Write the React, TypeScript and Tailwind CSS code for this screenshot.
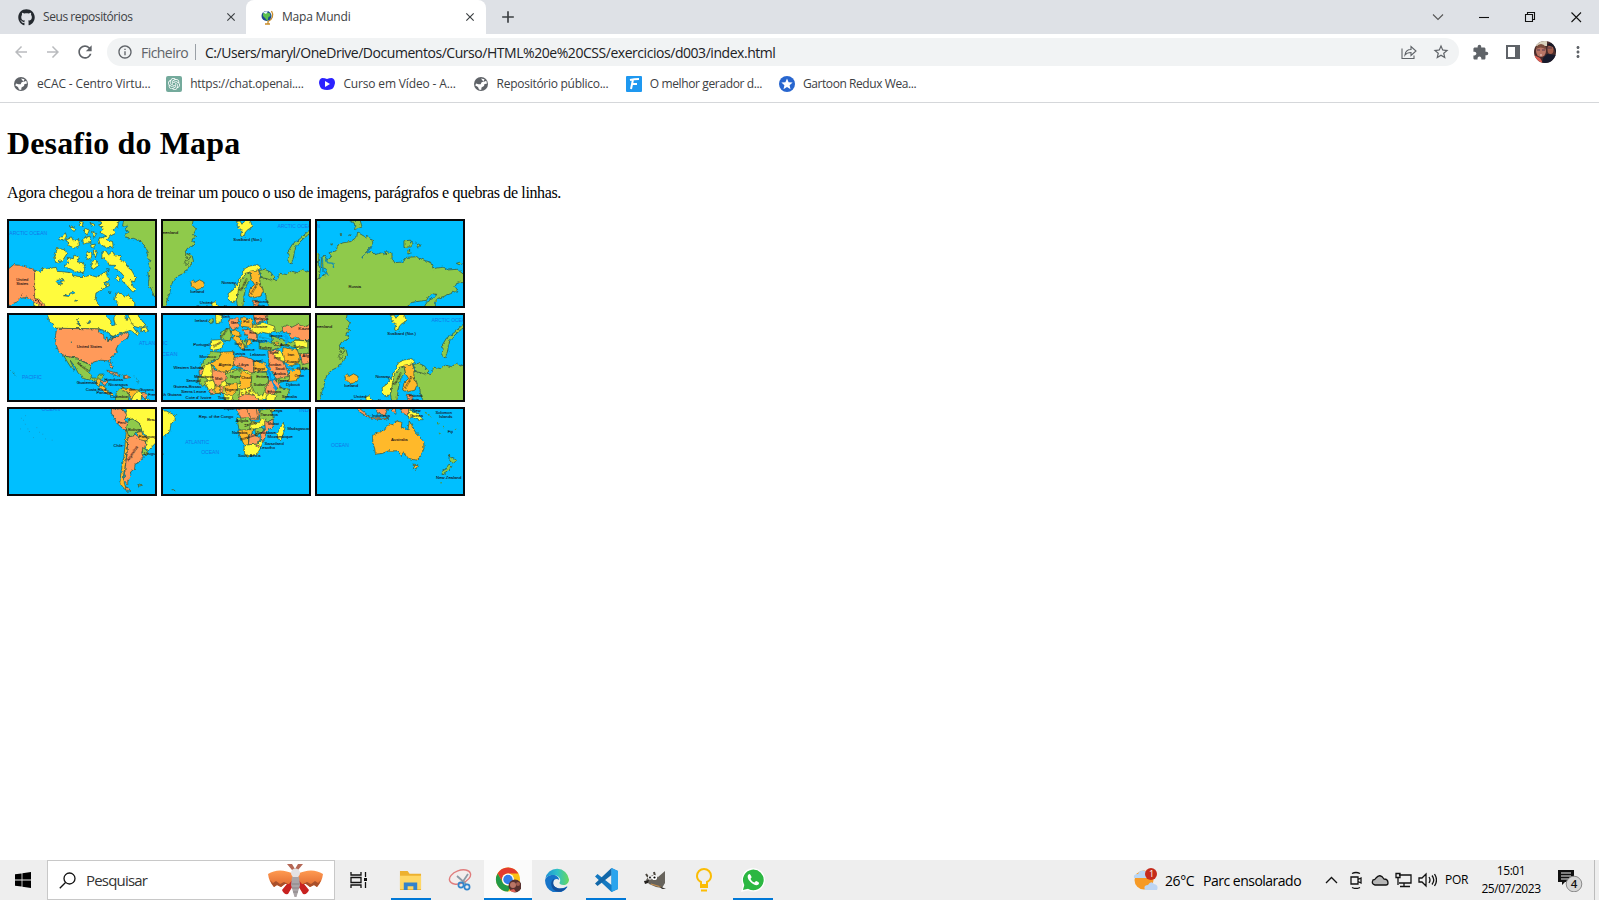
import React from "react";
import { FaGithub } from "react-icons/fa";
import { SiOpenai } from "react-icons/si";
import {
  MdArrowBack,
  MdArrowForward,
  MdRefresh,
  MdInfoOutline,
  MdStarBorder,
  MdExtension,
  MdMoreVert,
  MdClose,
  MdAdd,
} from "react-icons/md";

const Y = "#fffb3d";
const G = "#8fca4c";
const O = "#ff9a5a";
const A = "#ffb92b";

type LandProps = { d: string; c: string };
const Land = ({ d, c }: LandProps) => (
  <path d={d} fill={c} stroke="#2f4a35" strokeWidth="2" strokeLinejoin="round" />
);

type LabelProps = { x: number; y: number; t: string; r?: number; s?: number; w?: number };
const Label = ({ x, y, t, r = 0, s = 11, w }: LabelProps) => (
  <text
    x={x}
    y={y}
    fontSize={s}
    textLength={w}
    lengthAdjust="spacingAndGlyphs"
    transform={`rotate(${r} ${x} ${y})`}
    fill="#1b1016"
    stroke="#1b1016"
    strokeWidth="0.2"
  >
    {t}
  </text>
);
const Sea = ({ x, y, t, w }: LabelProps) => (
  <text x={x} y={y} fontSize="14" textLength={w} lengthAdjust="spacingAndGlyphs" fill="#1677e8">
    {t}
  </text>
);

type TileProps = { id: string; box: string; land: React.ReactNode; children?: React.ReactNode };
const Tile = ({ id, box, land, children }: TileProps) => (
  <div className="h-[89px] w-[150px] border-2 border-[#07090b] bg-[#00bfff]">
    <svg viewBox={box} preserveAspectRatio="none" className="block h-full w-full overflow-hidden font-['Liberation_Sans',sans-serif]">
      <filter id={id} x="-5%" y="-5%" width="110%" height="110%">
        <feTurbulence type="fractalNoise" baseFrequency="0.11" numOctaves="2" seed="4" />
        <feDisplacementMap in="SourceGraphic" scale="10" xChannelSelector="R" yChannelSelector="G" />
      </filter>
      <g filter={`url(#${id})`}>{land}</g>
      {children}
    </svg>
  </div>
);

const NorthCanada = () => (
  <Tile
    id="n1"
    box="26 16 440 257"
    land={
      <>
        <Land c={G} d="M376 0 L368 30 384 32 374 42 386 48 376 60 384 70 400 68 422 76 436 92 446 112 440 128 454 136 446 146 452 160 444 172 448 190 446 206 456 224 464 244 490 260 490 0Z" />
        <Land c={Y} d="M103 165 L122 168 132 158 150 160 168 156 172 168 192 170 210 172 216 180 236 184 256 184 272 180 292 186 306 176 320 168 322 184 330 192 312 204 318 216 302 226 288 234 286 250 294 264 302 290 100 290Z" />
        <Land c={O} d="M10 168 L28 158 40 148 58 150 80 156 103 163 103 250 116 252 134 272 130 285 112 268 98 256 80 246 60 250 48 262 36 266 10 280Z" />
        <Land c={Y} d="M172 98 L196 104 200 116 188 134 168 144 162 128Z M202 126 L220 130 222 118 238 126 232 140 250 142 256 158 250 172 226 170 214 162 192 154 204 142Z" />
        <Land c={Y} d="M196 52 L200 64 188 76 176 72Z M198 70 L214 64 220 76 236 72 238 90 222 98 206 90Z M208 32 L228 40 222 48Z M240 16 L250 20 246 34 238 26Z M256 38 L268 44 262 58 252 50Z M248 68 L270 62 274 80 250 86Z M274 44 L290 54 282 66Z M272 88 L286 86 284 98 274 96Z M262 108 L276 114 272 134 258 128Z M280 104 L292 110 288 124 282 120Z M270 20 L284 26 276 34Z" />
        <Land c={Y} d="M292 12 L308 22 296 28 310 40 300 50 320 62 296 70 300 86 322 98 340 94 338 78 322 74 330 62 346 54 340 42 352 38 358 12Z" />
        <Land c={Y} d="M276 138 L288 134 294 152 280 162 272 152Z M306 110 L318 106 326 118 338 108 346 122 362 120 360 132 376 140 384 156 396 166 408 188 404 200 394 196 400 214 408 224 398 230 382 212 366 196 372 182 358 166 344 160 346 150 328 150 322 136 306 128Z M352 180 L362 188 356 198 346 190Z M318 200 L330 210 320 216Z M326 232 L334 230Z" />
        <Land c={Y} d="M350 290 L354 266 344 254 350 234 368 236 374 246 386 240 394 252 404 262 410 290Z" />
        <g fill="#00bfff" stroke="#2f4a35" strokeWidth="2">
          <path d="M166 196l14-2 8-4 4 6-12 4 8 6-12 2zM190 242l16-4 12-10 6 6-12 4-6 6zM224 256l10-2-6 5z" />
          <path d="M320 160l8 2-2 8z" />
        </g>
        <path d="M64 242l4-8M100 250l14 8 10 14" stroke="#51271e" strokeWidth="3" fill="none" />
      </>
    }
  >
    <path d="M103 164V250" stroke="#a95a3a" strokeWidth="1.5" />
    <Sea x={27} y={57} t="ARCTIC OCEAN" w={114} />
    <Label x={48} y={197} t="United" w={36} />
    <Label x={48} y={210} t="States" w={36} />
  </Tile>
);

const NorthAtlantic = ({ id }: { id: string }) => (
  <Tile
    id={id}
    box="14 16 440 257"
    land={
      <>
        <Land c={G} d="M0 0H108L102 28 114 40 106 56 112 66 100 74 112 84 104 92 88 98 80 110 102 122 106 138 92 154 80 172 60 182 46 194 38 212 34 236 24 262 18 290H0Z" />
        <Land c={G} d="M82 114l14 6-4 10-10-4zM80 134l14 6-8 10-6-6z" />
        <Land c={Y} d="M234 18 L246 16 252 26 262 14 268 10 278 18 284 34 270 42 262 50 258 64 248 58 252 44 242 36Z" />
        <Land c={G} d="M470 30 L444 54 424 72 404 86 392 106 394 120 390 138 400 146 408 124 410 108 414 94 430 76 448 60 470 46Z" />
        <Land c={A} d="M96 198l10-4 4 8 14-8 12 6 4 12-10 8-14 4-10-8-6-6z" />
        <Land c={G} d="M470 164 L446 170 434 162 420 172 400 168 386 178 366 174 362 188 352 196 338 186 320 190 306 182 304 200 312 224 324 240 326 256 340 290H470Z" />
        <Land c={G} d="M304 166 L320 162 338 170 350 186 342 196 326 190 314 188Z" />
        <Land c={A} d="M276 168 L300 160 306 178 306 204 316 226 308 244 286 248 272 242 276 222 290 208 280 192Z" />
        <Land c={Y} d="M210 236 L226 224 238 204 248 184 260 160 276 152 300 148 310 158 300 164 280 168 262 176 252 194 244 216 238 248 226 264 212 258Z" />
        <Land c={G} d="M240 230 L248 198 262 174 276 172 280 190 268 204 262 224 258 246 254 280 240 280 236 258Z" />
        <Land c={O} d="M282 256h20l-2 12 4 20h-20l4-18z" />
        <Land c={Y} d="M160 264l12-4 10 14-4 12h-12z" />
      </>
    }
  >
    <Sea x={359} y={36} t="ARCTIC OCEAN" w={112} />
    <Label x={-2} y={55} t="Greenland" w={62} />
    <Label x={226} y={77} t="Svalbard (Nor.)" w={86} />
    <Label x={96} y={234} t="Iceland" w={42} />
    <Label x={190} y={206} t="Norway" w={44} />
    <Label x={125} y={267} t="United" w={38} />
    <Label x={116} y={278} t="Kingdom" w={50} />
    <Label x={198} y={278} t="Den." w={28} />
    <Label x={290} y={264} t="Estonia" w={42} />
    <Label x={292} y={276} t="Latvia" w={30} />
    <Label x={250} y={230} t="Sweden" r={-62} w={44} />
    <Label x={282} y={240} t="Finland" r={-62} w={42} />
  </Tile>
);

const Russia = () => (
  <Tile
    id="n3"
    box="14 16 440 257"
    land={
      <>
        <Land c={G} d="M0 110 L20 116 18 148 24 160 20 190 0 198Z" />
        <Land c={G} d="M0 200 L28 186 44 172 40 160 26 156 28 126 38 120 46 134 58 124 50 112 72 106 76 90 92 82 116 78 134 64 136 50 156 62 178 68 182 82 174 98 160 112 178 108 188 118 208 112 222 118 218 108 240 112 240 128 248 142 272 140 284 126 314 124 340 136 356 140 364 160 392 156 410 164 436 162 470 188 470 205 438 200 430 214 438 226 416 236 396 244 378 250 370 260 372 290H0Z" />
        <path d="M268 292L288 272 300 262 326 258 344 256 350 244 366 236 376 238 364 250 350 256 340 270 332 292Z" fill="#00bfff" stroke="#2f4a35" strokeWidth="2" />
        <Land c={G} d="M110 14l16 8 4 20 20-8-6-20zM276 76l20-2 8 12-8 8-20 2zM312 82l16 8-10 8zM288 104l10 8-10 4zM434 144l12-4 6 6-10 2zM56 84h4v4h-4zM84 54h4v3h-4zM110 58h6v3h-6z" />
        <path d="M30 126l2 40 18 14 M40 128l6 14 16 2 2 14" fill="none" stroke="#128fb0" strokeWidth="4" />
        <path d="M180 92l-16 20-16 14" fill="none" stroke="#217f91" strokeWidth="3" />
      </>
    }
  >
    <Sea x={13} y={36} t="N" w={10} />
    <Label x={109} y={220} t="Russia" w={38} />
  </Tile>
);

const NorthAmerica = () => (
  <Tile
    id="n4"
    box="26 14 440 256"
    land={
      <>
        <Land c={Y} d="M134 0 L144 20 148 32 168 54 300 56 318 70 340 78 360 70 376 66 392 60 412 74 420 68 408 62 400 50 420 38 408 24 390 22 380 30 376 0Z" />
        <Land c={Y} d="M386 18 L382 0H404l14 20 20 24-14 10-22-6zM424 54l14-4 8 12-20 2z" />
        <Land c={O} d="M170 54 L300 56 308 66 318 74 334 84 352 80 374 66 388 72 382 84 370 90 356 102 348 118 352 128 334 140 330 150 340 170 334 176 326 152 300 150 280 156 270 170 260 158 244 152 232 144 192 138 178 128 168 104 166 76Z" />
        <Land c={G} d="M192 138 L232 144 244 152 260 158 272 170 268 188 276 204 290 204 298 192 312 192 308 206 294 214 280 212 252 206 234 188 224 168 210 150 224 180 214 174 200 152Z" />
        <g fill="#00bfff" stroke="#2f4a35" strokeWidth="2">
          <path d="M296 58l12 2 20 8 6 10-8 16-6-14-6 12-4-20-14-6zM324 90l16-6-6 8zM336 80l14-4-2 6zM230 26l8 10 2 12-6-12zM262 40l8-10 2 6z" />
          <path d="M314 0l4 16 14 14 4 16 10-2-4-18 10-26z" />
        </g>
        <Land c={A} d="M292 206l12 2-6 18 16 4 8 14 20 8-4 6-22-10-14-14-14-12z" />
        <Land c={O} d="M304 212h20l-4 16-10-4zM320 180l20 6 24 10-12 2-20-8zM370 198l14-4 6 8-18 4z" />
        <Land c={G} d="M350 244l22-12 2 10 14 6-2 26h-40z" />
        <Land c={A} d="M366 234l24 2 28 4-6 18-20 10-4-20-18-6z" />
        <Land c={Y} d="M414 242l12 6-2 24h-30l6-14zM436 262l24 12h-24z" />
        <Land c={O} d="M426 250l16 2-4 14-10-2z" />
        <path d="M402 198l10 8 4 16M34 184l12 12M214 94v4" fill="none" stroke="#2b6f65" strokeWidth="3" strokeDasharray="4 3" />
      </>
    }
  >
    <Label x={230} y={114} t="United States" w={76} />
    <Sea x={418} y={105} t="ATLANTIC" w={74} />
    <Sea x={65} y={207} t="PACIFIC" w={60} />
    <Label x={230} y={160} t="Mexico" r={38} w={42} />
    <Label x={314} y={214} t="Honduras" w={56} />
    <Label x={230} y={223} t="Guatemala" w={62} />
    <Label x={326} y={228} t="Nicaragua" w={58} />
    <Label x={257} y={242} t="Costa Rica" w={62} />
    <Label x={290} y={252} t="Panama" w={46} />
    <Label x={331} y={264} t="Colombia" w={52} />
    <Label x={386} y={244} t="Ven." w={24} />
    <Label x={420} y={243} t="Guyana" w={42} />
    <Label x={446} y={258} t="French" w={36} />
  </Tile>
);

const AfricaEurope = () => (
  <Tile
    id="n5"
    box="14 14 440 256"
    land={
      <>
        <Land c={G} d="M320 0H470V60L440 68 420 56 396 50 372 62 360 70 340 56 330 40Z" />
        <Land c={O} d="M470 36 L440 50 420 42 400 52 388 44 374 50 376 66 396 70 400 86 416 80 430 92 470 90Z" />
        <Land c={Y} d="M158 90l30-2 10 10-8 18-24 4-10-4zM276 46l40-10 34 12 2 14-20 8-18-4-14 6-22-8zM172 10l20 6-4 22-14 2z" />
        <Land c={G} d="M154 28l10-6 2 14-12 4zM188 66l26-14 6 22-4 18-28-4zM304 98l26-4 36 0 4 18-30 8-36-4zM250 90l14 2 4 20-12-6z" />
        <Land c={O} d="M214 26l26-4 4 26-20 12-10-14zM286 10l40 4 2 14-36 12zM254 60l22-4 24 20-4 16-26-8z" />
        <Land c={A} d="M248 22l34 4 2 26-34-4zM222 82l18-6 18 28 2 16-12-4-14-22zM376 112l48 8 4 40-36 8-20-22z" />
        <Land c={G} d="M340 76l30 10 28 12 20-10 36 6v54l-30-14-8-22-30-4-40-6zM424 150l40-10v40l-36-6z" />
        <Land c={O} d="M330 122l34-2 22 54 10 30-40 8-22-44zM428 130h40v24l-34 10z" />
        <Land c={Y} d="M364 122l14 12 2 22-22-8-10-18zM410 90l40 2v20l-34 4z" />
        <Land c={G} d="M160 124l28 2-6 22-20 4-24 22-14-2 14-22zM356 206l40-8-2 12-38 10z" />
        <Land c={Y} d="M132 170l26-12 12 24 30 4 40-12 40 12 44 4 10 40 10 40H200l-4-20-28 0-28-24z" />
        <Land c={A} d="M188 126l40-2 2 40-20 20-24 4-28-28 24-14zM396 176h30l4 14-16 22-20 2z" />
        <Land c={O} d="M228 142l24-4 34 10 2 44-10-4-30-16-22-6z" />
        <Land c={A} d="M288 154l34 2 8 28-42 2zM244 178l38 18-4 36-28 10-4-22z" />
        <Land c={Y} d="M132 170l26-12 10 54-40 2z" />
        <Land c={O} d="M162 178l42 10 4 18-18 12-14 22-14-6zM122 182l14-8-4 18-8 4zM326 216l24-8 26 30-24 16-30-6z" />
        <Land c={G} d="M206 190l34-12 10 4-4 38-20 6-24-8zM282 188l44-2 6 26-10 26-8 20-24-10-10-24z" />
        <Land c={G} d="M120 198l24 6 10 14-20 10-16-12zM360 232l36 6-16 36h-46l18-24zM222 274l6-38 20 0-4 38z" />
        <Land c={Y} d="M140 216l26-6 8 24-20 10zM206 220l18 4 0 18-18 2zM246 240l32-8 12 18-16 16-32 2zM330 248l24 8-6 24h-30z" />
        <Land c={A} d="M170 226l16 4v20h-14zM200 228l36-10 4 16-20 24-18-4z" />
        <Land c={O} d="M150 240l16-2 4 14-12 2zM242 262l20-10 30 4 12 20h-60zM186 226l10 6-2 20-8-4z" />
        <Land c={A} d="M216 62l20-4 14 20-22 0zM264 90l14-2 4 14-12 2zM350 94l12 2v10h-10z" />
        <path d="M322 160l22 52 12 28" fill="none" stroke="#0093df" strokeWidth="6" />
        <path d="M384 160l16 18 12 2" fill="none" stroke="#00a9ef" strokeWidth="6" />
        <path d="M378 74l10 8-2 16" fill="none" stroke="#00a9ef" strokeWidth="9" />
        <path d="M306 80l20 4 18 8-12 6-30-2z" fill="#00bfff" stroke="#35524d" />
      </>
    }
  >
    <Sea x={-40} y={104} t="ATLANTIC" w={68} />
    <Sea x={-2} y={136} t="OCEAN" w={60} />
    <Label x={110} y={35} t="Ireland" w={38} />
    <Label x={192} y={22} t="Neth" w={24} />
    <Label x={218} y={40} t="Ger" w={22} />
    <Label x={256} y={38} t="Pol" w={18} />
    <Label x={288} y={28} t="Belarus" w={44} />
    <Label x={286} y={54} t="Ukraine" w={42} />
    <Label x={422} y={60} t="Kazak" w={42} />
    <Label x={334} y={79} t="Georgia" w={40} />
    <Label x={192} y={84} t="France" r={-55} w={34} />
    <Label x={166} y={112} t="Spain" r={-30} w={28} />
    <Label x={274} y={72} t="Rom." w={24} />
    <Label x={230} y={105} t="Italy" w={22} />
    <Label x={105} y={108} t="Portugal" w={50} />
    <Label x={284} y={96} t="Bulgaria" w={44} />
    <Label x={304} y={115} t="Turkey" w={38} />
    <Label x={366} y={106} t="Azer." w={30} />
    <Label x={406} y={112} t="Turkm." w={38} />
    <Label x={252} y={122} t="Greece" w={38} />
    <Label x={222} y={135} t="Tunisia" w={40} />
    <Label x={276} y={139} t="Lebanon" w={48} />
    <Label x={334} y={132} t="Syria" w={28} />
    <Label x={348} y={146} t="Iraq" w={20} />
    <Label x={389} y={136} t="Iran" w={20} />
    <Label x={434} y={140} t="Afg." w={24} />
    <Label x={124} y={143} t="Morocco" w={50} />
    <Label x={181} y={167} t="Algeria" w={38} />
    <Label x={242} y={169} t="Libya" w={30} />
    <Label x={284} y={157} t="Israel" w={30} />
    <Label x={289} y={180} t="Egypt" w={32} />
    <Label x={330} y={167} t="Jordan" w={40} />
    <Label x={386} y={160} t="Kuwait" w={38} />
    <Label x={352} y={181} t="Saudi" w={30} />
    <Label x={348} y={194} t="Arabia" w={36} />
    <Label x={418} y={180} t="U.A.E." w={36} />
    <Label x={410} y={200} t="Oman" w={30} />
    <Label x={46} y={178} t="Western Sahara" w={90} />
    <Label x={108} y={203} t="Mauritania" w={58} />
    <Label x={171} y={209} t="Mali" w={22} />
    <Label x={216} y={204} t="Niger" w={30} />
    <Label x={250} y={207} t="Chad" w={28} />
    <Label x={295} y={205} t="Eritrea" w={38} />
    <Label x={358} y={216} t="Yemen" w={36} />
    <Label x={84} y={217} t="Senegal" w={44} />
    <Label x={287} y={227} t="Sudan" w={34} />
    <Label x={385} y={227} t="Djibouti" w={42} />
    <Label x={46} y={235} t="Guinea-Bissau" w={84} />
    <Label x={200} y={243} t="Nigeria" w={40} />
    <Label x={328} y={250} t="Ethiopia" w={42} />
    <Label x={68} y={248} t="Sierra Leone" w={76} />
    <Label x={10} y={257} t="ch Guiana" w={60} />
    <Label x={82} y={266} t="Cote d' Ivoire" w={78} />
    <Label x={178} y={268} t="Togo" w={36} />
    <Label x={250} y={256} t="C.A.R." r={-18} w={36} />
    <Label x={372} y={265} t="Somalia" w={46} />
  </Tile>
);

const SouthAmerica = () => (
  <Tile
    id="n7"
    box="26 296 440 256"
    land={
      <>
        <Land c={Y} d="M368 280 L380 300 376 322 388 328 400 326 420 340 426 362 440 378 442 394 436 410 446 422 462 404 490 380V280Z" />
        <Land c={O} d="M336 286l10 12 20-4 14 18-4 14 10 20-2 14-12-2-20-18-10-20-8-12z" />
        <Land c={G} d="M386 328l14-2 20 14 6 22-16 4-6 12-20 2-4-26z" />
        <Land c={A} d="M412 366l14-2 4 12 12 6-2 14-14-2-10-12zM380 356l6 22-4 40-4 40-8 44 6 26 20 16-24-8-12-18 4-36 8-40 4-40z" />
        <Land c={O} d="M384 380l24-4 18 14 14 2-4 16-10 18 4 16-14 16-10 4-2 14-12 10 2 14-10 10 0 14-10-12 2-40 6-40z" />
        <Land c={G} d="M428 412l14 8 4 12-18 2z" />
        <Land c={O} d="M376 530l20 12-16 2z" />
        <Land c={G} d="M414 524l10-2 4 4-10 2z" />
      </>
    }
  >
    <path d="M62 324h2m10 18h2m-16 14h2m20 0h2m2 8h3m20-12h2m6 14h2m8 6h2m6 14h2m18 4h2m-58-8h2m-26-66h2m-8 14h2" stroke="#287d9d" strokeWidth="2" />
    <Sea x={124} y={302} t="OCEAN" w={56} />
    <Label x={353} y={340} t="Peru" w={25} />
    <Label x={442} y={332} t="Brazil" w={34} />
    <Label x={385} y={362} t="Bolivia" w={38} />
    <Label x={417} y={383} t="Paraguay" w={52} />
    <Label x={341} y={411} t="Chile" w={28} />
    <Label x={432} y={434} t="Uruguay" w={50} />
    <Label x={386} y={454} t="Argentina" r={-56} s={12} w={52} />
  </Tile>
);

const SouthAfrica = () => (
  <Tile
    id="n8"
    box="14 296 440 256"
    land={
      <>
        <Land c={Y} d="M0 302 L24 302 36 308 52 316 50 328 38 342 34 364 18 378 0 382Z" />
        <Land c={O} d="M232 280 L236 300 244 312 250 326 272 324 282 330 302 328 304 300 312 280Z" />
        <Land c={G} d="M238 324l34-2 8 12 10 4-4 20-42 4-4-20zM306 300l32-6 10 32-20 10-22-8zM290 354l16-6 12 8-6 14-18 4z" />
        <Land c={Y} d="M280 336l26 0 4-8 14-4-2 20-18 8-14 4-16 0zM330 290l14 0 6 10-8 6z" />
        <Land c={A} d="M240 360l44-2-2 14-10 2 0 30-12 2-12-22z" />
        <Land c={O} d="M274 372l20 2 14 12-12 16-24 2zM320 330l8 6 18-10 0 24-22 14-4 26-8 4-4-20 14-20z" />
        <Land c={Y} d="M258 408l12-4 26-2 16-14 2 12-4 10-10 18-14 8-20 2-6-8z" />
        <Land c={Y} d="M376 338l6 12-4 16-8 22-10-2-2-16 8-14z" />
        <Land c={O} d="M294 406l8-2 2 6-8 2zM264 290l30 0 6 34-20 0-10-18z" />
      </>
    }
  >
    <Sea x={81} y={400} t="ATLANTIC" w={72} />
    <Sea x={129} y={431} t="OCEAN" w={54} />
    <Sea x={424} y={305} t="INDIAN" w={58} />
    <Label x={198} y={298} t="Equat. G." w={52} />
    <Label x={338} y={304} t="Kenya" w={36} />
    <Label x={122} y={322} t="Rep. of the Congo" w={104} />
    <Label x={308} y={317} t="Tanzania" w={52} />
    <Label x={233} y={335} t="Angola" w={38} />
    <Label x={260} y={350} t="Zambia" r={-14} w={38} />
    <Label x={330} y={343} t="Malawi" w={34} />
    <Label x={389} y={358} t="Madagascar" w={68} />
    <Label x={222} y={370} t="Namibia" w={46} />
    <Label x={294} y={371} t="Zimbabwe" w={60} />
    <Label x={248} y={392} t="Botswana" r={-18} w={52} />
    <Label x={329} y={384} t="Mozambique" w={76} />
    <Label x={320} y={403} t="Swaziland" w={58} />
    <Label x={306} y={416} t="Lesotho" w={46} />
    <Label x={240} y={441} t="South Africa" w={68} />
    <path d="M40 539l6 0 5 4M12 432h4" stroke="#3b6b42" strokeWidth="3" fill="none" />
  </Tile>
);

const Australia = () => (
  <Tile
    id="n9"
    box="14 296 440 256"
    land={
      <>
        <Land c={A} d="M182 374 L204 366 224 352 232 340 246 344 254 332 270 336 268 350 288 360 292 332 300 344 308 362 324 380 336 396 336 416 326 440 314 450 296 446 282 438 276 424 268 436 256 422 230 422 210 430 190 432 188 416 182 398Z" />
        <Land c={A} d="M304 462l14 2-6 14-6-4z" />
        <Land c={G} d="M412 434l8 10 14 6-8 10-8-4-6-8zM412 462l8 8-14 16-12 8-6-8 12-8z" />
        <Land c={O} d="M130 284l26 22 22 16-10 0-26-18zM186 284l22 0 20 10-10 22-20-8zM240 290l10 0 2 22-10-8zM178 322l26 2 26 0-14 4-40-2zM264 298l16-6 12 4v24l-16-10z" />
        <Land c={Y} d="M290 298l24 8 20 22-12 0-16-8-16 4z" />
        <path d="M340 306l20 14M376 338l6 6M382 368l8 8M430 360l8-6M394 348l4 2M386 518h4" stroke="#4f9546" strokeWidth="4" fill="none" strokeDasharray="6 4" />
      </>
    }
  >
    <Sea x={10} y={305} t="N" w={12} />
    <Sea x={56} y={410} t="OCEAN" w={54} />
    <Label x={180} y={321} t="Indonesia" w={54} />
    <Label x={302} y={306} t="New" w={24} />
    <Label x={294} y={319} t="Guinea" w={40} />
    <Label x={371} y={310} t="Solomon" w={50} />
    <Label x={382} y={323} t="Islands" w={40} />
    <Label x={408} y={367} t="Fiji" w={16} />
    <Label x={237} y={391} t="Australia" w={50} />
    <Label x={373} y={508} t="New Zealand" w={76} />
  </Tile>
);

const TabStrip = () => (
  <div className="flex h-[34px] bg-[#dee1e6] text-[12px] text-[#3c4043]">
    <div className="flex w-[246px] items-center pl-[18px]">
      <FaGithub className="size-[17px] text-[#24292f]" />
      <span className="ml-2 w-[181px] whitespace-nowrap tracking-[-0.43px]">Seus repositórios</span>
      <MdClose className="size-[14px]" />
    </div>
    <div className="w-[240px] rounded-t-lg bg-white">
      <div className="flex h-full items-center pl-[13px]">
        <svg viewBox="0 0 16 16" className="size-4">
          <path d="M12.500 2a7 7 0 0 1-3.500 10.500v2M6 15h5" fill="none" stroke="#c98c28" strokeWidth="1.3" />
          <circle cx="7.500" cy="7" r="5" fill="#1d4a8f" />
          <path d="M4 4.500q3-2 7 0l.5 2.500-2 1-1 4-2.500-3-2-2z" fill="#5cc14e" />
          <path d="M4 3.500q3-2 5-1L7 5z" fill="#e8f7ff" />
        </svg>
        <span className="ml-[7px] w-[181px] whitespace-nowrap tracking-[-0.2px]">Mapa Mundi</span>
        <MdClose className="size-[14px]" />
      </div>
    </div>
    <div className="flex flex-1 items-center">
      <MdAdd className="ml-3 size-[20px]" />
      <svg viewBox="0 0 150 14" className="mr-[17px] ml-auto h-[14px] w-[150px]" fill="none" stroke="#111" strokeWidth="1.1">
        <path d="M1 4.500l5 5 5-5" stroke="#555" />
        <path d="M47 7.500h10" />
        <path d="M93.500 4.500h7v7h-7zM95.500 4.500v-2h7v7h-2" />
        <path d="M139.500 2.500l9.500 9.500M149 2.500l-9.500 9.500" />
      </svg>
    </div>
  </div>
);

const Toolbar = () => (
  <div className="flex h-[36px] items-center bg-white pl-[12px] text-[#5f6368]">
    <MdArrowBack className="size-[18px] text-[#b9bbbe]" />
    <MdArrowForward className="ml-[14px] size-[18px] text-[#b9bbbe]" />
    <MdRefresh className="ml-[13px] size-[20px]" />
    <div className="ml-[12px] flex h-7 w-[1352px] items-center rounded-full bg-[#f1f3f4] pl-[10px] text-[14px]">
      <MdInfoOutline className="size-4" />
      <span className="ml-2 w-[47px] whitespace-nowrap tracking-[-0.55px]">Ficheiro</span>
      <span className="ml-[7px] h-4 w-px bg-[#9aa0a6]" />
      <span className="ml-[9px] whitespace-nowrap tracking-[-0.455px] text-[#202124]">
        C:/Users/maryl/OneDrive/Documentos/Curso/HTML%20e%20CSS/exercicios/d003/index.html
      </span>
      <svg viewBox="0 0 16 16" className="mr-[15px] ml-auto size-4 shrink-0" fill="none" stroke="currentColor" strokeWidth="1.1">
        <path d="M1 4.500v10h12v-3M4 11c.5-4 3-5.500 6-5.500V2.500L15 7l-5 4.500V8.500C7.500 8.500 5.500 9 4 11z" />
      </svg>
      <MdStarBorder className="mr-[9px] size-[18px]" />
    </div>
    <MdExtension className="ml-[13px] size-[17px]" />
    <svg viewBox="0 0 14 14" className="ml-[17px] size-[14px]">
      <path fill="currentColor" fillRule="evenodd" d="M0 0h14v14H0zM2 2v10h7V2z" />
    </svg>
    <svg viewBox="0 0 22 22" className="ml-[14px] size-[22px]">
      <clipPath id="face">
        <circle cx="11" cy="11" r="11" />
      </clipPath>
      <g clipPath="url(#face)">
        <path fill="#4b2d2c" d="M0 0h22v22H0z" />
        <path fill="#d9d2bd" d="M0 0h13v5H0z" />
        <ellipse cx="7" cy="10" rx="5" ry="6" fill="#b97566" />
        <path d="M2 6q5-6 10 0l-1 2q-4-3-9 0z" fill="#7a4b3b" />
        <ellipse cx="16.500" cy="8.500" rx="3" ry="4.500" fill="#a45e4b" />
        <path d="M13 4q5-5 9 3v5l-3-6z" fill="#191b28" />
        <path d="M3 9h3m2 0h3m3-2h4" stroke="#54394a" strokeWidth="1.200" />
        <path d="M0 14l6 3 3 5H0z" fill="#dc5e53" />
        <path d="M9 17l4-4 9 1v8H8z" fill="#171a2c" />
        <path d="M6 14h2" stroke="#ead5ce" />
      </g>
    </svg>
    <MdMoreVert className="ml-[13px] size-[18px]" />
  </div>
);

const Globe = () => (
  <svg viewBox="0 0 16 16" className="size-4">
    <circle cx="8" cy="8" r="7" fill="#5f6368" />
    <path d="M8 2.500l3.500.8-1 2.200-2 .8-.8 2H5.500L3 7.500 2.300 9.500 5 11l1 2.500 2.200.5.3-2.500 2.500-1.500.5-2 2.300-.2q.2-1.500-.6-3L10.500 6" fill="#fff" />
    <path d="M8 4.500L10 5 8.500 6.500z" fill="#5f6368" />
  </svg>
);

type Mark = { icon: React.ReactNode; text: string; cls: string };
const marks: Mark[] = [
  { icon: <Globe />, text: "eCAC - Centro Virtu...", cls: "tracking-[-0.15px]" },
  {
    icon: (
      <span className="flex size-4 items-center justify-center rounded-[2px] bg-[#74aa9c]">
        <SiOpenai className="size-[12px] text-white" />
      </span>
    ),
    text: "https://chat.openai....",
    cls: "tracking-[-0.25px]",
  },
  {
    icon: (
      <svg viewBox="0 0 16 16" className="size-4">
        <path d="M3 2q3 0 5 1 2-1 5-1 3 1 3 5-1 5-3 6-5 2-10 0Q1 12 0 7q0-4 3-5z" fill="#2b22ff" />
        <path d="M6 5l5 3-5 3z" fill="#fff" />
      </svg>
    ),
    text: "Curso em Vídeo - A...",
    cls: "tracking-[-0.15px]",
  },
  { icon: <Globe />, text: "Repositório público...", cls: "tracking-[-0.27px]" },
  {
    icon: (
      <svg viewBox="0 0 16 16" className="size-4">
        <rect width="16" height="16" rx="1" fill="#1e98f0" />
        <path d="M4 4q4-1 9-1M7 3.500L5 13M5.500 8H11" stroke="#fff" strokeWidth="2" fill="none" />
      </svg>
    ),
    text: "O melhor gerador d...",
    cls: "tracking-[-0.37px]",
  },
  {
    icon: (
      <svg viewBox="0 0 16 16" className="size-4">
        <circle cx="8" cy="8" r="8" fill="#2866cf" />
        <path d="M8 2.500l1.600 3.700 4 .3-3 2.700.9 4L8 11l-3.500 2.200.9-4-3-2.700 4-.3z" fill="#fff" />
      </svg>
    ),
    text: "Gartoon Redux Wea...",
    cls: "tracking-[-0.42px]",
  },
];

const Bookmarks = () => (
  <div className="flex h-[33px] items-center border-b border-[#d5d7da] bg-white pb-1 pl-[13px] text-[12px] text-[#3c4043]">
    {marks.map((m) => (
      <div key={m.text} className="flex w-[153.200px] items-center gap-2 whitespace-nowrap">
        {m.icon}
        <span className={m.cls}>{m.text}</span>
      </div>
    ))}
  </div>
);

const Moth = () => (
  <svg viewBox="0 0 57 36" className="h-[36px] w-[57px]">
    <defs>
      <linearGradient id="wing" x2="0" y2="1">
        <stop stopColor="#ff9b52" />
        <stop offset="1" stopColor="#e0692f" />
      </linearGradient>
    </defs>
    <path d="M24 17L15 28q2 5 6 4l6-10zM33 17l9 11q-2 5-6 4l-6-10z" fill="#c82220" />
    <path d="M27 12Q12 5 1 12q1 8 6 13l3-2 4 2 4-3 4 0 5-6zM30 12q15-7 26 0-1 8-6 13l-3-2-4 2-4-3-4 0-5-6z" fill="url(#wing)" />
    <path d="M3 18q2 5 4 7l3-2 4 2 4-3 3 0-4-2-4 2-4-3-3 2zM54 18q-2 5-4 7l-3-2-4 2-4-3-3 0 4-2 4 2 4-3 3 2z" fill="#a9502b" />
    <path d="M25 8l-5-6 5 0 3 5 3-5 5 0-5 6z" fill="#b56856" />
    <ellipse cx="28.500" cy="11" rx="4.500" ry="4.500" fill="#e4e1e2" />
    <path d="M25 15h7l1 8-3.500 12h-2L24 23z" fill="#aaa4a6" />
    <path d="M24.500 22h8m-7.500 4h7m-6 4h5" stroke="#8b8486" />
  </svg>
);

const ExplorerIcon = () => (
  <svg viewBox="0 0 24 24" className="size-[23px]">
    <path d="M1 2h8l2 3h12v17H1z" fill="#edb12f" />
    <path d="M1 7h22v14H1z" fill="#ffd765" />
    <path d="M5 22v-8h14v8h-4v-4H9v4z" fill="#3483cc" />
  </svg>
);
const SnipIcon = () => (
  <svg viewBox="0 0 24 24" className="size-6" fill="none">
    <ellipse cx="12" cy="9" rx="11" ry="6.500" transform="rotate(-20 12 9)" stroke="#e07c7c" strokeWidth="1.400" fill="#f3eded" />
    <path d="M9 8l9 8M20 6l-6 9" stroke="#8c9aa6" strokeWidth="1.800" />
    <circle cx="13" cy="17" r="2.600" stroke="#3285cc" strokeWidth="1.700" />
    <circle cx="19" cy="19" r="2.600" stroke="#3285cc" strokeWidth="1.700" />
  </svg>
);
const ChromeIcon = () => (
  <svg viewBox="0 0 26 26" className="size-[26px]">
    <circle cx="13" cy="12.500" r="12" fill="#fbc116" />
    <path d="M2.600 6.500A12 12 0 0 1 23.400 6.500H13a6 6 0 0 0-5.200 9z" fill="#e33b2e" />
    <path d="M2.600 6.500A12 12 0 0 0 13 24.500l5.200-9a6 6 0 0 1-10.400 0z" fill="#229a48" />
    <circle cx="13" cy="12.500" r="6" fill="#fff" />
    <circle cx="13" cy="12.500" r="4.700" fill="#327de8" />
    <circle cx="20" cy="19" r="6.500" fill="#57312f" />
    <circle cx="18" cy="18" r="3" fill="#b97566" />
    <circle cx="23" cy="17" r="2" fill="#a25f50" />
    <path d="M15 23l4-1 2 3h-4z" fill="#dd6057" />
  </svg>
);
const EdgeIcon = () => (
  <svg viewBox="0 0 24 24" className="size-6">
    <defs>
      <linearGradient id="edgeTop">
        <stop stopColor="#1b8fd6" />
        <stop offset=".5" stopColor="#2fc0c8" />
        <stop offset="1" stopColor="#67d85d" />
      </linearGradient>
    </defs>
    <path d="M.2 11A12 12 0 0 1 24 11.500c0 3.500-2.500 5.500-5.500 5.500-2.500 0-4.500-1-4-2.200C17 11 13 7 9 7 4 7 1 9 .2 11z" fill="url(#edgeTop)" />
    <path d="M.1 12c.9-3.500 4-5 8-5 3 0 6 2 6 5-2-2-6-1-6 3 0 5 7 7.500 13.500 3.500.6-.3 1 .2.600.7A12 12 0 0 1 .1 12z" fill="#1674c9" />
    <path d="M9.500 10.500c-5.500 2.500-3.500 10.500 1.500 12.800 4.500 1.400 8.500-.800 11-4.300-6 3.200-13 1.400-13.800-3.500 0-2 .3-4 1.300-5z" fill="#134f9c" />
  </svg>
);
const CodeIcon = () => (
  <svg viewBox="0 0 24 24" className="size-6">
    <path d="M17.500 0L24 3v18l-6.500 3L1 8.500 3.500 6 17.500 17z" fill="#1479c1" />
    <path d="M17.500 0v7L3.500 18 1 15.500z" fill="#1167a9" />
    <path d="M17.500 0L24 3v18l-6.500 3z" fill="#2ba4ed" />
  </svg>
);
const GimpIcon = () => (
  <svg viewBox="0 0 24 24" className="size-6">
    <path d="M5 9l5-2 5 2 7-6 0 12-3 5-6-1-7-3-3-4z" fill="#67635c" />
    <path d="M3 6l2 3M11 4l1 4" stroke="#4c473f" strokeWidth="2" />
    <circle cx="7" cy="9.500" r="2.200" fill="#eee" />
    <circle cx="11.500" cy="9.500" r="2.600" fill="#fff" />
    <circle cx="7" cy="9.500" r=".9" />
    <circle cx="11.500" cy="9.500" r="1.100" />
    <path d="M1 13l5-1-1 3-3 1z" fill="#24211e" />
    <path d="M8 16l10 3" stroke="#c9914e" strokeWidth="1.200" />
    <path d="M16 18l7 3-4 0z" fill="#3c3934" />
  </svg>
);
const BulbIcon = () => (
  <svg viewBox="0 0 18 24" className="h-6 w-[18px]" fill="none" stroke="#fbbc04" strokeWidth="2">
    <path d="M6 17v-3C3 12.500 2 10.500 2 8a7 7 0 0 1 14 0c0 2.500-1 4.500-4 6v3z" />
    <path d="M5 19h8M6 22.500h6" />
  </svg>
);
const WhatsIcon = () => (
  <svg viewBox="0 0 24 24" className="size-6">
    <path d="M1 23l1.600-6A11 11 0 1 1 7 21.500z" fill="#2cb742" stroke="#fff" strokeWidth="1.300" />
    <path d="M8.500 6c-3 1-2 5 1 8s7.500 4.500 8.500 1.500c.4-1.500-2.500-2.500-3-2.500s-1 1.500-1.600 1.400c-1.500-.3-3.400-2.200-3.800-3.500-.1-.5 1-1.200 1-1.700S9.300 6 8.500 6z" fill="#fff" />
  </svg>
);

type AppBtnProps = { children: React.ReactNode; open?: boolean; active?: boolean };
const AppButton = ({ children, open, active }: AppBtnProps) => (
  <div className={active ? "flex h-10 w-[48px] flex-col items-center bg-[#fbfbfb]" : "flex h-10 w-[49px] flex-col items-center"}>
    <div className="flex h-[38px] items-center pt-[2px]">{children}</div>
    {(open || active) && <div className={active ? "h-[2px] w-[48px] bg-[#0078d7]" : "h-[2px] w-[40px] bg-[#0078d7]"} />}
  </div>
);

const Taskbar = () => (
  <div className="flex h-10 items-center bg-[#eeeeee] text-black">
    <svg viewBox="0 0 16 16" className="ml-[15px] size-4">
      <path d="M0 2.300L6.600 1.400V7.600H0zM7.400 1.300L16 0v7.600H7.400zM0 8.400h6.600v6.200L0 13.700zM7.400 8.400H16V16l-8.600-1.300z" />
    </svg>
    <div className="ml-4 flex h-10 w-[288px] items-center border border-[#c8c8c8] bg-white pl-[11px]">
      <svg viewBox="0 0 17 17" className="size-[17px]" fill="none" stroke="#111" strokeWidth="1.300">
        <circle cx="10.500" cy="6.500" r="5.500" />
        <path d="M6.500 10.500L.8 16.200" />
      </svg>
      <span className="ml-[10px] w-[62px] text-[15px] tracking-[-0.8px] whitespace-nowrap text-[#333]">Pesquisar</span>
      <div className="mr-[10px] ml-auto">
        <Moth />
      </div>
    </div>
    <svg viewBox="0 0 18 16" className="mr-[18px] ml-[15px] h-4 w-[18px]" fill="none" stroke="#111" strokeWidth="1.300">
      <path d="M1 0v3h10V0M1 16v-3h10v3M1 5.500h10v5H1zM15.500 0v5M15.500 10v6" />
      <path d="M14 6h3v3h-3z" fill="#111" stroke="none" />
    </svg>
    <div className="flex">
      <AppButton open><ExplorerIcon /></AppButton>
      <AppButton><SnipIcon /></AppButton>
      <AppButton active><ChromeIcon /></AppButton>
      <AppButton><EdgeIcon /></AppButton>
      <AppButton open><CodeIcon /></AppButton>
      <AppButton><GimpIcon /></AppButton>
      <AppButton><BulbIcon /></AppButton>
      <AppButton open><WhatsIcon /></AppButton>
    </div>
    <div className="ml-auto flex items-center text-[14px]">
      <svg viewBox="0 0 25 24" className="h-6 w-[25px]">
        <circle cx="11" cy="12" r="9.500" fill="#f69a26" />
        <path d="M1 10q-1-4 4-4 2-5 7-3 3 1 3 7z" fill="#b9d6f5" />
        <path d="M12 22q-2-5 3-5 3-5 6-1 5 1 3 6z" fill="#bdd5f3" />
        <circle cx="18" cy="6" r="6" fill="#c52b1c" />
        <text x="16" y="9" fontSize="9" fill="#fff">1</text>
      </svg>
      <span className="ml-[7px] w-[38px] whitespace-nowrap tracking-[-0.4px]">26°C</span>
      <span className="w-[98px] whitespace-nowrap tracking-[-0.5px]">Parc ensolarado</span>
      <svg viewBox="0 0 112 18" className="ml-[24px] h-[18px] w-[112px]" fill="none" stroke="#111" strokeWidth="1.300">
        <path d="M1 12l5.500-5.500L12 12" />
        <path d="M26 6h7v7h-7zM33 8.500l3-1.500v5l-3-1.500M27 2.500q4-2 8 0M27 16.500q4 2 8 0" />
        <path d="M50 14q-4-1-2-5 2 0 3-2 4-5 8 1 4 0 4 4 0 2-2 2z" fill="#b5b5b5" />
        <path d="M74 4h12v8H74M79 12v3.500M75 15.500h10M71 2.500h4v4h-4zM73 6v8" />
        <path d="M94 7h3l4-4v12l-4-4h-3zM104 6q2 3 0 6M107 4.500q3.500 4.500 0 9M109.500 3q4 6 0 12" />
      </svg>
      <span className="ml-[8px] w-[24px] text-[12px] tracking-[-0.3px]">POR</span>
      <div className="ml-3 w-[60px] text-center text-[12px] leading-[18px] tracking-[-0.45px] whitespace-nowrap">
        <div>15:01</div>
        <div>25/07/2023</div>
      </div>
      <svg viewBox="0 0 25 24" className="ml-[17px] h-6 w-[25px]">
        <path d="M0 2h16v12H7l-3 3v-3H0z" fill="#111" />
        <path d="M3 5h10M3 8h10M3 11h7" stroke="#eee" strokeWidth="1.200" />
        <circle cx="16" cy="16" r="7.800" fill="#d6d6d6" stroke="#8a8a8a" />
        <text x="12.700" y="20" fontSize="11.500" fontWeight="600" fill="#111">4</text>
      </svg>
      <div className="mr-[4px] ml-[11px] h-10 w-px bg-[#bcbcbc]" />
    </div>
  </div>
);

export default function App() {
  return (
    <div className="flex h-[900px] w-[1599px] flex-col overflow-hidden bg-white font-['Open_Sans','Noto_Sans',sans-serif]">
      <TabStrip />
      <Toolbar />
      <Bookmarks />
      <main className="flex-1 pt-[22px] pl-[7px] font-['Liberation_Serif','Times_New_Roman',serif] text-black">
        <h1 className="text-[32px] leading-[37px] font-bold tracking-[0.15px]">Desafio do Mapa</h1>
        <p className="mt-[22px] text-[16px] leading-[18px] tracking-[-0.365px]">
          Agora chegou a hora de treinar um pouco o uso de imagens, parágrafos e quebras de linhas.
        </p>
        <div className="mt-[17px] grid w-fit grid-cols-3 gap-x-1 gap-y-[5px]">
          <NorthCanada />
          <NorthAtlantic id="n2" />
          <Russia />
          <NorthAmerica />
          <AfricaEurope />
          <NorthAtlantic id="n6" />
          <SouthAmerica />
          <SouthAfrica />
          <Australia />
        </div>
      </main>
      <Taskbar />
    </div>
  );
}
